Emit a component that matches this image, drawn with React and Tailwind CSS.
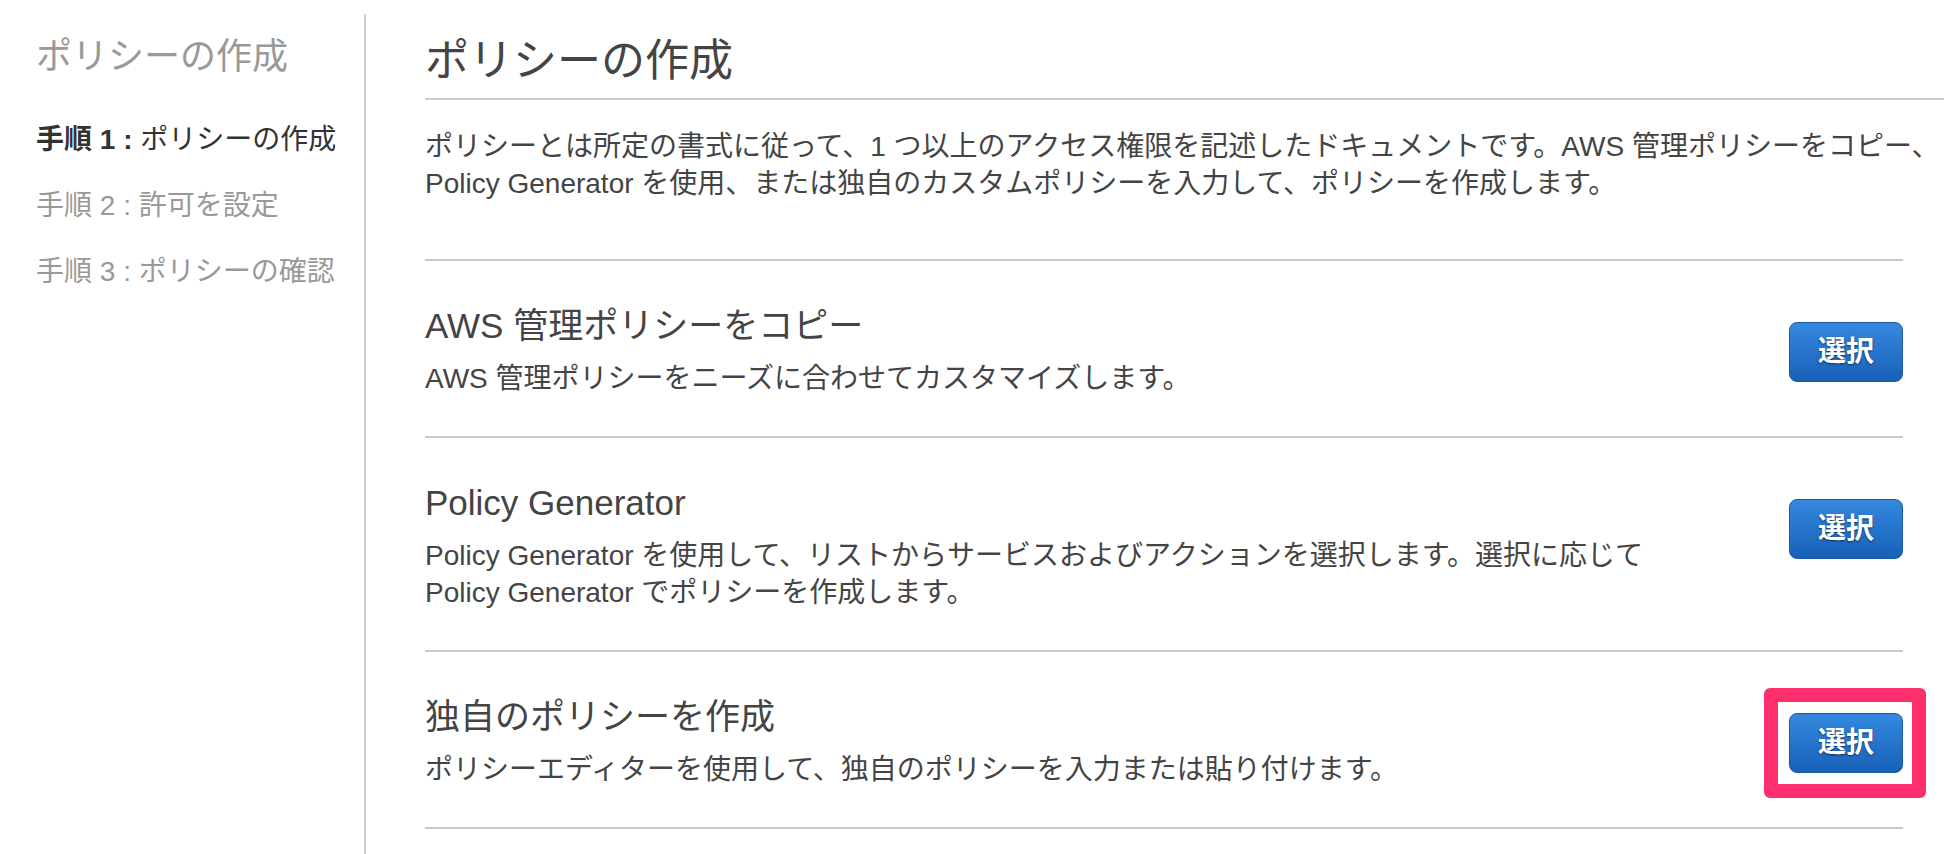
import React from "react";

const font = { fontFamily: '"Liberation Sans", "Noto Sans CJK JP", sans-serif' };

const sections = [
  {
    title: "AWS 管理ポリシーをコピー",
    lines: ["AWS 管理ポリシーをニーズに合わせてカスタマイズします。"],
  },
  {
    title: "Policy Generator",
    lines: [
      "Policy Generator を使用して、リストからサービスおよびアクションを選択します。選択に応じて",
      "Policy Generator でポリシーを作成します。",
    ],
  },
  {
    title: "独自のポリシーを作成",
    lines: ["ポリシーエディターを使用して、独自のポリシーを入力または貼り付けます。"],
    highlight: true,
  },
];

const SelectButton = ({ highlight }) => (
  <div className="relative mt-[18px] shrink-0">
    <button className="w-[114px] h-[60px] rounded-[8px] border border-[#1a5aa6] bg-linear-to-b from-[#3489df] to-[#1761b7] text-white text-[28px] font-bold leading-none [text-shadow:0_1px_2px_rgba(0,0,0,0.6)]">
      選択
    </button>
    {highlight && (
      <div className="absolute -left-[25px] -right-[23px] -top-[25px] -bottom-[25px] border-[14px] border-[#ff2e6c] rounded-[6px] pointer-events-none" />
    )}
  </div>
);

const App = () => {
  return (
    <div className="min-h-screen bg-white flex pt-[14px] text-[#444]" style={font}>
      {/* steps sidebar */}
      <aside className="w-[366px] shrink-0 border-r-2 border-[#d0d0d0] pl-[36px] pt-[18px]">
        <h2 className="text-[36px] leading-[50px] text-[#999]">ポリシーの作成</h2>
        <ul className="mt-[25px] text-[28px] leading-[66px]">
          <li className="text-[#333]">
            <span className="font-bold">手順 1 : </span>ポリシーの作成
          </li>
          <li className="text-[#999]">手順 2 : 許可を設定</li>
          <li className="text-[#999]">手順 3 : ポリシーの確認</li>
        </ul>
      </aside>

      <main className="flex-1 pl-[59px] pr-[16px] pt-[19px]">
        <h1 className="text-[44px] leading-[56px] pb-[9px] border-b-2 border-[#cccccc]">
          ポリシーの作成
        </h1>
        <p className="mt-[28px] text-[28px] leading-[37px] whitespace-nowrap">
          ポリシーとは所定の書式に従って、1 つ以上のアクセス権限を記述したドキュメントです。AWS 管理ポリシーをコピー、
          <br />
          Policy Generator を使用、または独自のカスタムポリシーを入力して、ポリシーを作成します。
        </p>

        <div className="mt-[57px] pr-[41px]">
          {sections.map((s, i) => (
            <div
              key={s.title}
              className={`flex items-start justify-between border-t-2 border-[#cacaca] pt-[43px] pb-[39px] ${
                i === sections.length - 1 ? "border-b-2" : ""
              }`}
            >
              <div>
                <h3 className="text-[35px] leading-[44px]">{s.title}</h3>
                <p className="mt-[12px] text-[28px] leading-[37px] whitespace-nowrap">
                  {s.lines.map((l, j) => (
                    <React.Fragment key={j}>
                      {j > 0 && <br />}
                      {l}
                    </React.Fragment>
                  ))}
                </p>
              </div>
              <SelectButton highlight={s.highlight} />
            </div>
          ))}
        </div>
      </main>
    </div>
  );
};

export default App;
